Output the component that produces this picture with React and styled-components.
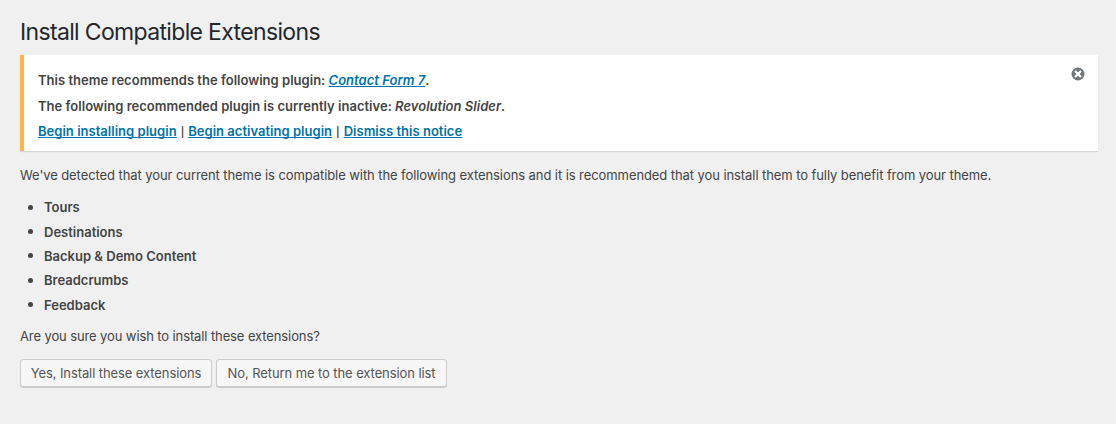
import React from 'react'
import styled, { createGlobalStyle } from 'styled-components'

const GlobalStyle = createGlobalStyle`
    *{
        box-sizing: border-box;
    }
    body{
        margin: 0;
        background: #f0f0f0;
        color: #444;
        font-family: Inter, "Liberation Sans", sans-serif;
        font-size: 13px;
        line-height: 18px;
    }
`
const Wrap = styled.div`
min-height: 424px;
padding: 17px 18px 0 20px;
white-space: nowrap;
`
const Title = styled.h1`
margin: 0;
height: 38px;
font-size: 23px;
font-weight: 400;
line-height: 30px;
letter-spacing: -.66px;
color: #23282d;
`
const Notice = styled.div`
display: flex;
justify-content: space-between;
height: 96px;
padding: 12px 13px 0 14px;
background: #fff;
border-left: 4px solid #ffb53f;
box-shadow: 0 1px 1px 0 rgba(0,0,0,.1);
`
const NoticeLine = styled.p`
margin: 5px 0 8px;
line-height: 17.6px;
font-weight: 600;
letter-spacing: .02px;
`
const Link = styled.a`
color: #0073aa;
text-decoration: underline;
text-decoration-skip-ink: none;
`
const Separator = styled.span`
margin: 0 4px;
font-size: 10px;
font-weight: 600;
`
const Dismiss = styled.button`
width: 14px;
height: 14px;
padding: 0;
border: 0;
background: none;
cursor: pointer;
>svg{
    display: block;
}
`
const Text = styled.p`
margin: 0;
padding-top: ${props => props.$top}px;
letter-spacing: ${props => props.$tight ? '-.11px' : '-.081px'};
`
const List = styled.ul`
margin: 11px 0 0;
padding-left: 8px;
list-style: none;
`
const Item = styled.li`
display: flex;
align-items: center;
height: 24.4px;
line-height: 24px;
font-weight: 600;
&::before{
    content: "";
    width: 5px;
    height: 5px;
    margin-right: 11px;
    border-radius: 50%;
    background: #444;
}
`
const Actions = styled.div`
display: flex;
gap: 4px;
margin-top: 14px;
`
const Button = styled.button`
width: ${props => props.$width}px;
height: 28px;
padding: 0;
font-family: inherit;
font-size: 13px;
letter-spacing: -.09px;
color: #555;
background: #f7f7f7;
border: 1px solid #ccc;
border-radius: 3px;
box-shadow: 0 1px 0 #ccc;
cursor: pointer;
`

const extensions = ['Tours', 'Destinations', 'Backup & Demo Content', 'Breadcrumbs', 'Feedback']

const DismissIcon = () => (
    <svg width="14" height="14" viewBox="0 0 14 14">
        <circle cx="7" cy="7" r="6.5" fill="#72777c" />
        <path d="M4 4l6 6M10 4l-6 6" stroke="#fff" strokeWidth="2.2" />
    </svg>
)

export default function App() {
    return (
        <Wrap>
            <GlobalStyle />
            <Title>Install Compatible Extensions</Title>
            <Notice>
                <div>
                    <NoticeLine>This theme recommends the following plugin: <Link href="#"><em>Contact Form 7</em></Link>.</NoticeLine>
                    <NoticeLine>The following recommended plugin is currently inactive: <em>Revolution Slider</em>.</NoticeLine>
                    <NoticeLine>
                        <Link href="#">Begin installing plugin</Link>
                        <Separator>|</Separator>
                        <Link href="#">Begin activating plugin</Link>
                        <Separator>|</Separator>
                        <Link href="#">Dismiss this notice</Link>
                    </NoticeLine>
                </div>
                <Dismiss aria-label="Dismiss this notice"><DismissIcon /></Dismiss>
            </Notice>
            <Text $top={15}>We've detected that your current theme is compatible with the following extensions and it is recommended that you install them to fully benefit from your theme.</Text>
            <List>
                {extensions.map(name => <Item key={name}>{name}</Item>)}
            </List>
            <Text $top={10} $tight>Are you sure you wish to install these extensions?</Text>
            <Actions>
                <Button $width={192}>Yes, Install these extensions</Button>
                <Button $width={231}>No, Return me to the extension list</Button>
            </Actions>
        </Wrap>
    )
}
